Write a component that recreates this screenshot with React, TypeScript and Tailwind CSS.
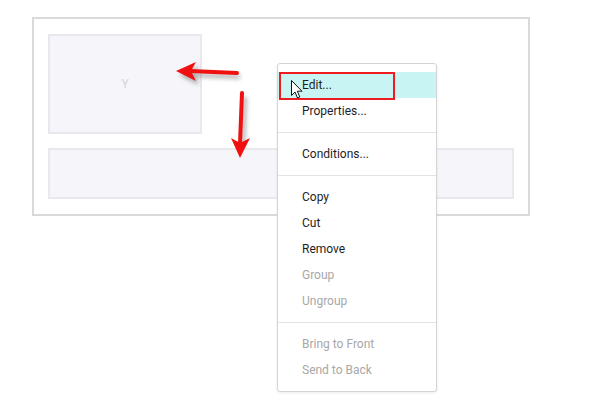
import React from 'react';

type MenuItem = { label: string; disabled?: boolean; active?: boolean };

const sections: MenuItem[][] = [
  [{ label: 'Edit...', active: true }, { label: 'Properties...' }],
  [{ label: 'Conditions...' }],
  [
    { label: 'Copy' },
    { label: 'Cut' },
    { label: 'Remove' },
    { label: 'Group', disabled: true },
    { label: 'Ungroup', disabled: true },
  ],
  [
    { label: 'Bring to Front', disabled: true },
    { label: 'Send to Back', disabled: true },
  ],
];

const Cursor = () => (
  <svg width="13" height="20" viewBox="0 0 13 20" className="absolute left-[13px] top-[8px]">
    <path
      d="M0.5 0.5 L0.5 15.5 L4 12 L6.5 18 L8.8 17 L6.3 11.2 L11 11.2 Z"
      fill="#fff"
      stroke="#111"
      strokeWidth="1"
      strokeLinejoin="round"
    />
  </svg>
);

const ContextMenu = () => (
  <div className="absolute left-[277px] top-[63px] w-[160px] bg-white border border-[#d4d4d4] rounded-[3px] shadow-[0_1px_3px_rgba(0,0,0,0.08)] py-2">
    {sections.map((items, si) => (
      <div key={si}>
        {si > 0 && <div className="h-px bg-[#e3e3e3] my-2" />}
        {items.map((it) => (
          <div
            key={it.label}
            className={`relative h-[26px] flex items-center pl-6 text-[12px] ${
              it.active ? 'bg-[#c9f4f4]' : ''
            } ${it.disabled ? 'text-[#a8a8a8]' : 'text-[#1e1e1e]'}`}
          >
            {it.label}
            {it.active && (
              <>
                <div className="absolute left-[1px] top-0 w-[116px] h-[28px] border-2 border-[#ee1c1c]" />
                <Cursor />
              </>
            )}
          </div>
        ))}
      </div>
    ))}
  </div>
);

const Arrows = () => (
  <svg width="591" height="407" className="absolute left-0 top-0 pointer-events-none">
    <defs>
      <filter id="sh" x="-20%" y="-20%" width="140%" height="140%">
        <feGaussianBlur stdDeviation="2" />
      </filter>
    </defs>
    <g opacity="0.45" filter="url(#sh)" transform="translate(3,4)">
      <path d="M237 73 L192 71" stroke="#555" strokeWidth="4" />
      <path d="M176 71 L196 62 L192 71 L196 81 Z" fill="#555" />
      <path d="M242 93 L240 142" stroke="#555" strokeWidth="4" />
    </g>
    <path d="M237 73 L190 71" stroke="#f01010" strokeWidth="4" strokeLinecap="round" />
    <path d="M176 71 L196 62 L191 71 L196 81 Z" fill="#f01010" />
    <path d="M242 93 L240 144" stroke="#f01010" strokeWidth="4" strokeLinecap="round" />
    <path d="M240 158 L231 138 L240 143 L250 138 Z" fill="#f01010" />
  </svg>
);

export default function App() {
  return (
    <div
      className="relative w-[591px] h-[407px] bg-white overflow-hidden"
      style={{ fontFamily: 'Roboto, "Liberation Sans", sans-serif' }}
    >
      <div className="pt-[17px] pl-[32px]">
        <div className="w-[498px] h-[199px] border-2 border-[#d9d9d9] pt-[15px] px-[14px] flex flex-col gap-[14px]">
          <div className="w-[154px] h-[100px] bg-[#f6f6fa] border-2 border-[#e8e8ee] flex items-center justify-center text-[12px] text-[#d4d4dc]">
            Y
          </div>
          <div className="w-[466px] h-[51px] bg-[#f6f6fa] border-2 border-[#e8e8ee]" />
        </div>
      </div>
      <Arrows />
      <ContextMenu />
    </div>
  );
}
